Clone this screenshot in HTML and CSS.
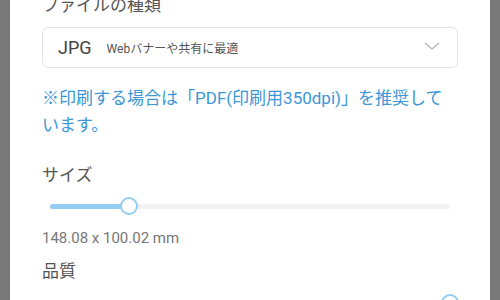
FILE: index.html
```html
<!DOCTYPE html>
<html lang="ja">
<head>
    <meta charset="UTF-8">
    <meta name="viewport" content="width=device-width, initial-scale=1.0">
    <title>書き出し設定</title>
    <link rel="stylesheet" href="styles.css">
</head>
<body>
    <div class="sheet">
        <div class="label label-top">ファイルの種類</div>
        <div class="select">
            <span class="select-main">JPG</span>
            <span class="select-sub">Webバナーや共有に最適</span>
            <svg class="chevron" width="16" height="8" viewBox="0 0 16 8">
                <polyline points="1,1 8,7 15,1" fill="none" stroke="#b5b5b5" stroke-width="1.3"/>
            </svg>
        </div>
        <p class="note">※印刷する場合は「PDF(印刷用350dpi)」を推奨しています。</p>

        <div class="label label-size">サイズ</div>
        <div class="slider slider-size">
            <div class="track">
                <div class="fill" style="width: 19.75%"></div>
                <div class="thumb" style="left: 19.75%"></div>
            </div>
        </div>
        <div class="dims">148.08 x 100.02 mm</div>

        <div class="label label-quality">品質</div>
        <div class="slider slider-quality">
            <div class="track">
                <div class="fill" style="width: 100%"></div>
                <div class="thumb" style="left: 100%"></div>
            </div>
        </div>
    </div>
</body>
</html>
```

FILE: styles.css
```css
body {
    margin: 0;
    height: 300px;
    overflow: hidden;
    background-color: #787878;
    font-family: Roboto, "Noto Sans CJK JP", sans-serif;
}
.sheet {
    margin: 0 10px;
    height: 300px;
    overflow: hidden;
    background: #fff;
    padding: 0 32px;
    display: flex;
    flex-direction: column;
}
.sheet > * {
    flex-shrink: 0;
}
.label {
    font-size: 17px;
    line-height: 24px;
    color: #555;
}
.label-top {
    margin-top: -7px;
}
.select {
    margin-top: 10px;
    height: 39px;
    border: 1px solid #e4e4e4;
    border-radius: 6px;
    display: flex;
    align-items: center;
    padding: 0 17px 0 15px;
}
.select-main {
    font-size: 18px;
    color: #444;
}
.select-sub {
    font-size: 12px;
    color: #555;
    margin-left: 15px;
}
.chevron {
    margin-left: auto;
    margin-top: -4px;
}
.note {
    margin: 17px 0 0;
    font-size: 17px;
    line-height: 27px;
    color: #3b97d6;
    padding-right: 6px;
}
.label-size {
    margin-top: 24px;
}
.slider {
    padding: 0 8px;
    height: 24px;
    display: flex;
    align-items: center;
}
.slider-size {
    margin-top: 7px;
}
.slider-quality {
    margin-top: 8px;
}
.track {
    position: relative;
    flex: 1;
    height: 5px;
    border-radius: 3px;
    background: #f2f2f2;
}
.fill {
    height: 100%;
    border-radius: 3px;
    background: #93cef2;
}
.thumb {
    position: absolute;
    top: 50%;
    width: 14px;
    height: 14px;
    margin: -9px 0 0 -9px;
    border: 2px solid #93cef2;
    border-radius: 50%;
    background: #fff;
}
.dims {
    margin-top: 11px;
    font-size: 15px;
    color: #777;
}
.label-quality {
    margin-top: 12px;
}
```
